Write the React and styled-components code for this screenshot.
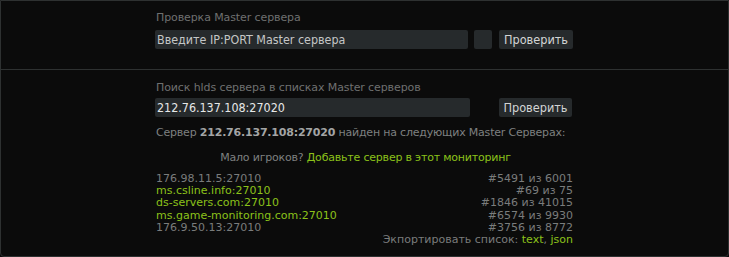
import React from "react";
import styled, { createGlobalStyle } from "styled-components";

const Global = createGlobalStyle`
  html, body { margin: 0; padding: 0; background: #0b0b0b; }
  body { font-family: "DejaVu Sans", Verdana, sans-serif; }
`;

const Panel = styled.div`
  width: 729px;
  height: 257px;
  box-sizing: border-box;
  border: 1px solid #2e3131;
  border-radius: 0 0 4px 4px;
  background: #0b0b0b;
  display: flex;
  flex-direction: column;
`;

const Section = styled.section`
  display: flex;
  justify-content: center;
  padding: ${(p) => p.$pad};
  border-bottom: ${(p) => (p.$divider ? "1px solid #2e3131" : "none")};
  flex: ${(p) => (p.$grow ? 1 : "none")};
`;

const Column = styled.div`
  width: 420px;
  margin-left: 1px;
  display: flex;
  flex-direction: column;
`;

const Label = styled.div`
  font-size: 11px;
  line-height: 13px;
  letter-spacing: -0.1px;
  color: #6f7070;
  margin-bottom: ${(p) => p.$gap}px;
  padding-left: 1px;
  white-space: nowrap;
`;

const FormRow = styled.div`
  display: flex;
  align-items: center;
  height: 19px;
`;

const TextInput = styled.input`
  box-sizing: border-box;
  width: ${(p) => p.$w}px;
  height: 19px;
  border: none;
  border-radius: 2px;
  background: #262a2c;
  color: ${(p) => p.$color};
  font-family: "DejaVu Sans Condensed", "DejaVu Sans", sans-serif;
  font-size: 12.4px;
  padding: 0 2px;
  outline: none;
  &::placeholder { color: #c4c6c6; opacity: 1; }
`;

const Square = styled.div`
  width: 18px;
  height: 19px;
  margin-left: 6px;
  border-radius: 2px;
  background: #262a2c;
`;

const Button = styled.button`
  box-sizing: border-box;
  width: ${(p) => p.$w}px;
  height: 19px;
  margin-left: ${(p) => p.$ml}px;
  border: none;
  border-radius: 2px;
  background: #262a2c;
  color: #d2d4d4;
  font-family: "DejaVu Sans Condensed", "DejaVu Sans", sans-serif;
  font-size: 12.6px;
  padding: 0;
  cursor: pointer;
`;

const Info = styled.div`
  font-size: 11px;
  line-height: 13px;
  letter-spacing: -0.2px;
  color: #7e8080;
  margin-top: ${(p) => p.$mt}px;
  text-align: ${(p) => (p.$center ? "center" : "left")};
  padding-left: 1px;
  white-space: nowrap;
  b { color: #a3a5a5; }
`;

const Green = styled.a`
  color: #8cc21a;
  text-decoration: none;
`;

const List = styled.div`
  margin-top: 9px;
  display: grid;
  grid-template-columns: 1fr auto;
  font-size: 11px;
  line-height: 12.2px;
  padding-left: 1px;
  padding-right: 2px;
  white-space: nowrap;
`;

const Name = styled.div`
  color: ${(p) => (p.$link ? "#8cc21a" : "#7a7c7c")};
`;

const Rank = styled.div`
  color: #7a7c7c;
  text-align: right;
`;

const Export = styled.div`
  grid-column: 1 / span 2;
  text-align: right;
  color: #7a7c7c;
`;

const rows = [
  { name: "176.98.11.5:27010", rank: "#5491 из 6001", link: false },
  { name: "ms.csline.info:27010", rank: "#69 из 75", link: true },
  { name: "ds-servers.com:27010", rank: "#1846 из 41015", link: true },
  { name: "ms.game-monitoring.com:27010", rank: "#6574 из 9930", link: true },
  { name: "176.9.50.13:27010", rank: "#3756 из 8772", link: false },
];

export default function App() {
  return (
    <>
      <Global />
      <Panel>
        <Section $pad="10px 0 20px" $divider>
          <Column>
            <Label $gap={6}>Проверка Master сервера</Label>
            <FormRow>
              <TextInput $w={313} $color="#c4c6c6" placeholder="Введите IP:PORT Master сервера" />
              <Square />
              <Button $w={74} $ml={7}>Проверить</Button>
            </FormRow>
          </Column>
        </Section>
        <Section $pad="11px 0 0" $grow>
          <Column>
            <Label $gap={4}>Поиск hlds сервера в списках Master серверов</Label>
            <FormRow>
              <TextInput $w={315} $color="#e6e8e8" defaultValue="212.76.137.108:27020" />
              <Button $w={73} $ml={29}>Проверить</Button>
            </FormRow>
            <Info $mt={9}>
              Сервер <b>212.76.137.108:27020</b> найден на следующих Master Серверах:
            </Info>
            <Info $mt={12} $center>
              Мало игроков? <Green href="#">Добавьте сервер в этот мониторинг</Green>
            </Info>
            <List>
              {rows.map((r) => (
                <React.Fragment key={r.name}>
                  <Name $link={r.link}>{r.name}</Name>
                  <Rank>{r.rank}</Rank>
                </React.Fragment>
              ))}
              <Export>
                Экпортировать список: <Green href="#">text</Green>, <Green href="#">json</Green>
              </Export>
            </List>
          </Column>
        </Section>
      </Panel>
    </>
  );
}
